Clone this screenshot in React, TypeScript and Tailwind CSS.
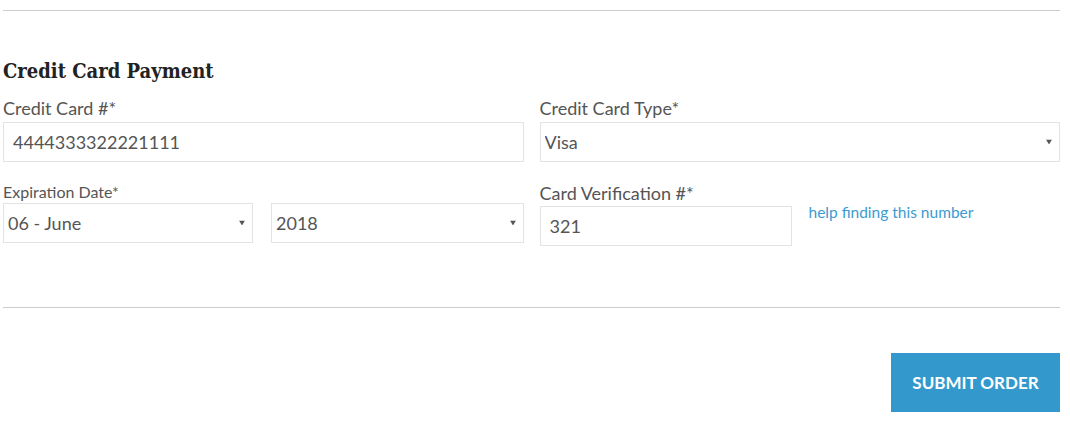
import { useState } from 'react';

const months = ['01 - January', '02 - February', '03 - March', '04 - April', '05 - May', '06 - June', '07 - July', '08 - August', '09 - September', '10 - October', '11 - November', '12 - December'];
const years = ['2017', '2018', '2019', '2020', '2021', '2022'];

function Caret() {
  return (
    <svg width="6" height="5" viewBox="0 0 6 5" className="pointer-events-none absolute right-[8px] top-1/2 -translate-y-1/2">
      <path d="M0 0h6L3 5z" fill="#555" />
    </svg>
  );
}

function SelectBox({ value, options, onChange }: { value: string; options: string[]; onChange: (v: string) => void }) {
  return (
    <div className="relative">
      <select
        value={value}
        onChange={(e) => onChange(e.target.value)}
        className="h-[40px] w-full appearance-none border border-[#e3e3e3] bg-white pl-[4px] pr-6 text-[18px] text-[#555] outline-none"
      >
        {options.map((o) => (
          <option key={o}>{o}</option>
        ))}
      </select>
      <Caret />
    </div>
  );
}

export default function App() {
  const [card, setCard] = useState('4444333322221111');
  const [type, setType] = useState('Visa');
  const [month, setMonth] = useState('06 - June');
  const [year, setYear] = useState('2018');
  const [cvv, setCvv] = useState('321');

  return (
    <div className="ml-[3px] w-[1057px] bg-white pt-[10px] text-[#555] font-['Lato','Liberation_Sans',sans-serif]">
      <hr className="border-0 border-t border-[#cccccc]" />

      {/* Payment fields */}
      <h3 className="mt-[48px] text-[20px] leading-[24px] font-bold text-[#222] font-['DejaVu_Serif_Condensed','DejaVu_Serif',serif]">
        Credit Card Payment
      </h3>

      <div className="mt-[15px] grid grid-cols-2 gap-x-4">
        <div>
          <label className="block text-[18px] leading-[20px]">Credit Card #*</label>
          <input
            value={card}
            onChange={(e) => setCard(e.target.value)}
            className="mt-[4px] h-[40px] w-full border border-[#e3e3e3] px-[9px] text-[18px] text-[#555] outline-none"
          />
        </div>
        <div>
          <label className="block text-[18px] leading-[20px]">Credit Card Type*</label>
          <div className="mt-[4px]">
            <SelectBox value={type} options={['Visa', 'MasterCard', 'American Express', 'Discover']} onChange={setType} />
          </div>
        </div>
      </div>

      <div className="mt-[21px] grid grid-cols-2 gap-x-4">
        <div>
          <label className="block text-[16px] leading-[17px]">Expiration Date*</label>
          <div className="mt-[3px] grid grid-cols-[250px_1fr] gap-[18px]">
            <SelectBox value={month} options={months} onChange={setMonth} />
            <SelectBox value={year} options={years} onChange={setYear} />
          </div>
        </div>
        <div className="flex">
          <div className="w-[252px]">
            <label className="block text-[18px] leading-[20px]">Card Verification #*</label>
            <input
              value={cvv}
              onChange={(e) => setCvv(e.target.value)}
              className="mt-[3px] h-[40px] w-full border border-[#e3e3e3] px-[9px] text-[18px] text-[#555] outline-none"
            />
          </div>
          <a href="#" className="ml-[17px] pt-[20px] text-[15.5px] leading-[18px] text-[#3d9ad1]">
            help finding this number
          </a>
        </div>
      </div>

      <hr className="mt-[61px] border-0 border-t border-[#cccccc]" />

      <div className="mt-[45px] flex justify-end">
        <button className="h-[59px] w-[169px] bg-[#3399cc] text-[17px] font-bold uppercase text-white">
          Submit Order
        </button>
      </div>
    </div>
  );
}
